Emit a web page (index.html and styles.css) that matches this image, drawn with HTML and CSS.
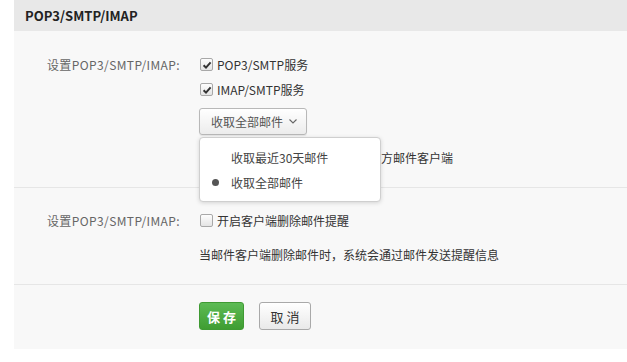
FILE: index.html
```html
<!DOCTYPE html>
<html>
	<head>
		<title>POP3/SMTP/IMAP</title>
		<meta charset="utf-8">
		<link rel="stylesheet" href="styles.css">
	</head>
	<body>
		<div class="panel">
			<div class="panel-head">POP3/SMTP/IMAP</div>

			<div class="section first">
				<div class="row">
					<div class="label">设置POP3/SMTP/IMAP:</div>
					<div class="controls">
						<div class="line">
							<span class="check on"><svg viewBox="0 0 12 12" width="12" height="12"><path d="M2.6 6.2 L5 8.6 L9.6 3.4" fill="none" stroke="#333" stroke-width="2"/></svg></span>
							<span class="text">POP3/SMTP服务</span>
						</div>
						<div class="line">
							<span class="check on"><svg viewBox="0 0 12 12" width="12" height="12"><path d="M2.6 6.2 L5 8.6 L9.6 3.4" fill="none" stroke="#333" stroke-width="2"/></svg></span>
							<span class="text">IMAP/SMTP服务</span>
						</div>
						<div class="dropdown">
							<button class="select-btn">收取全部邮件 <svg class="caret" viewBox="0 0 8 5" width="8" height="5"><path d="M0.5 0.5 L4 4 L7.5 0.5" fill="none" stroke="#666" stroke-width="1.1"/></svg></button>
							<ul class="menu">
								<li>收取最近30天邮件</li>
								<li class="active">收取全部邮件</li>
							</ul>
						</div>
						<!-- the start of this line sits under the open menu -->
						<div class="line under-menu">方邮件客户端</div>
					</div>
				</div>
			</div>

			<div class="section second">
				<div class="row">
					<div class="label">设置POP3/SMTP/IMAP:</div>
					<div class="controls">
						<div class="line">
							<span class="check"></span>
							<span class="text">开启客户端删除邮件提醒</span>
						</div>
						<div class="line hint">当邮件客户端删除邮件时，系统会通过邮件发送提醒信息</div>
					</div>
				</div>
			</div>

			<div class="section actions">
				<button class="btn save">保 存</button>
				<button class="btn cancel">取 消</button>
			</div>
		</div>
	</body>
</html>
```

FILE: styles.css
```css
html{
	font-family: "Noto Sans CJK SC", sans-serif;
	font-size: 12px;
}
body{
	margin: 0;
	background-color: #fff;
	color: #333;
}
.panel{
	margin-left: 14px;
	background-color: #f8f8f8;
}
.panel-head{
	height: 31px;
	line-height: 31px;
	padding-left: 11px;
	background-color: #e8e8e8;
	font-size: 13px;
	font-weight: bold;
	color: #222;
}
.section{
	border-bottom: 1px solid #e6e6e6;
}
.section.first{
	padding: 21px 0 17px;
}
.section.second{
	padding: 20px 0 17px;
}
.section.actions{
	border-bottom: none;
	padding: 17px 0 19px 185px;
	display: flex;
	gap: 15px;
}
.row{
	display: flex;
}
.label{
	width: 166px;
	text-align: right;
	line-height: 25px;
	color: #666;
	letter-spacing: 0.4px;
}
.controls{
	margin-left: 19px;
}
.line{
	display: flex;
	align-items: center;
	height: 25px;
}
.check{
	width: 11px;
	height: 11px;
	border: 1px solid #a8a8a8;
	border-radius: 2px;
	background: linear-gradient(#fdfdfd, #e4e4e4);
	margin: 0 4px 0 1px;
	display: flex;
	align-items: center;
	justify-content: center;
	overflow: hidden;
}
.check svg{
	flex: none;
}
.text{
	color: #333;
}
.dropdown{
	position: relative;
	margin-top: 6px;
}
.select-btn{
	height: 27px;
	padding: 0 9px 0 11px;
	font-family: inherit;
	font-size: 12px;
	color: #555;
	border: 1px solid #b8b8b8;
	border-radius: 3px;
	background: linear-gradient(#ffffff, #ececec);
	box-shadow: 0 1px 1px rgba(0,0,0,0.08);
	display: flex;
	align-items: center;
	gap: 6px;
}
.menu{
	position: absolute;
	top: 29px;
	left: 0;
	width: 180px;
	margin: 0;
	padding: 7px 0 6px;
	list-style: none;
	background-color: #fff;
	border: 1px solid #cfcfcf;
	border-radius: 4px;
	box-shadow: 0 1px 4px rgba(0,0,0,0.15);
	z-index: 2;
}
.menu li{
	height: 25px;
	line-height: 25px;
	padding-left: 31px;
	color: #444;
	position: relative;
}
.menu li.active::before{
	content: "";
	position: absolute;
	left: 12px;
	top: 9px;
	width: 7px;
	height: 7px;
	border-radius: 50%;
	background-color: #555;
}
.under-menu{
	margin-top: 10px;
	padding-left: 182px;
	color: #333;
}
.hint{
	margin-top: 9px;
	color: #333;
}
.btn{
	height: 28px;
	padding: 0;
	font-family: inherit;
	font-size: 13px;
	border-radius: 3px;
}
.save{
	width: 45px;
	color: #fff;
	font-weight: bold;
	border: 1px solid #3f9a33;
	background: linear-gradient(#5dbb55, #3f9d32);
}
.cancel{
	width: 52px;
	color: #333;
	border: 1px solid #a9a9a9;
	background: linear-gradient(#ffffff, #e9e9e9);
}
```
